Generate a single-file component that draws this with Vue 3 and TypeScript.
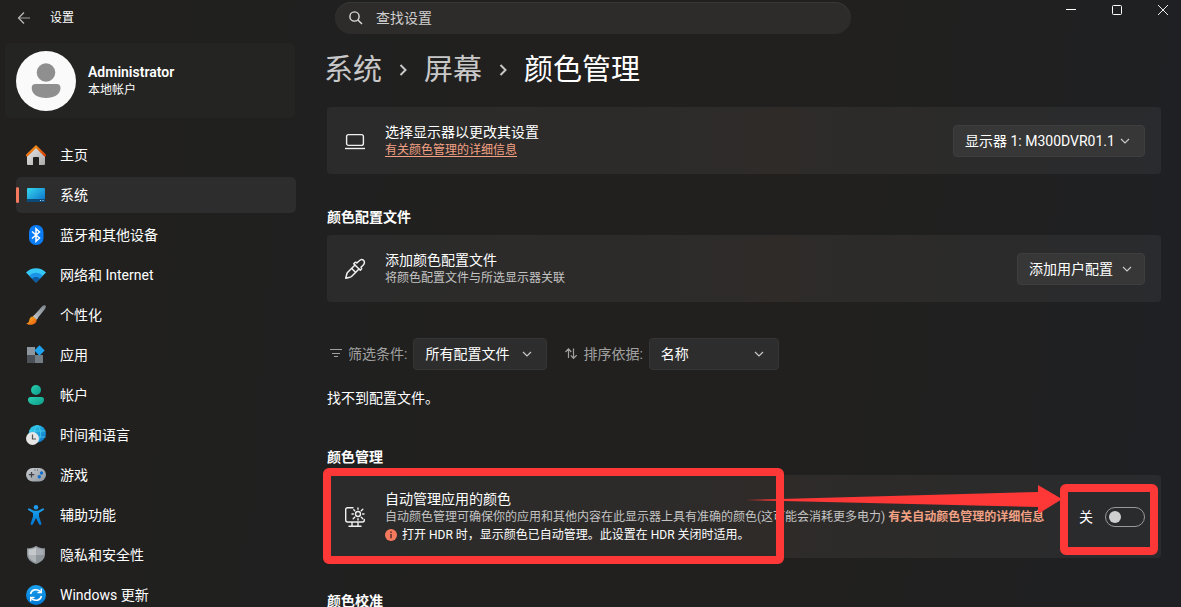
<script setup lang="ts">
import { ref } from 'vue'

interface NavItem {
  id: string
  label: string
}

const navItems: NavItem[] = [
  { id: 'home', label: '主页' },
  { id: 'system', label: '系统' },
  { id: 'bluetooth', label: '蓝牙和其他设备' },
  { id: 'network', label: '网络和 Internet' },
  { id: 'personal', label: '个性化' },
  { id: 'apps', label: '应用' },
  { id: 'accounts', label: '帐户' },
  { id: 'time', label: '时间和语言' },
  { id: 'gaming', label: '游戏' },
  { id: 'access', label: '辅助功能' },
  { id: 'privacy', label: '隐私和安全性' },
  { id: 'update', label: 'Windows 更新' },
]

const current = ref('system')
const query = ref('')
const autoManage = ref(false)
</script>

<template>
  <div class="window">
    <svg class="defs" width="0" height="0" aria-hidden="true">
      <defs>
        <linearGradient id="gRoof" x1="0" y1="0" x2="1" y2="1">
          <stop offset="0" stop-color="#f9a01b" /><stop offset="1" stop-color="#d83b01" />
        </linearGradient>
        <linearGradient id="gWall" x1="0" y1="0" x2="1" y2="1">
          <stop offset="0" stop-color="#e8e8e8" /><stop offset="1" stop-color="#a9a9a9" />
        </linearGradient>
        <linearGradient id="gScreen" x1="0" y1="0" x2="1" y2="1">
          <stop offset="0" stop-color="#35d8ee" /><stop offset="1" stop-color="#0a6cc8" />
        </linearGradient>
        <linearGradient id="gBlue" x1="0" y1="0" x2="0" y2="1">
          <stop offset="0" stop-color="#1ba3f0" /><stop offset="1" stop-color="#0078d4" />
        </linearGradient>
        <linearGradient id="gHandle" x1="1" y1="0" x2="0" y2="1">
          <stop offset="0" stop-color="#7d858c" /><stop offset="1" stop-color="#c3c8cc" />
        </linearGradient>
        <linearGradient id="gBrush" x1="0" y1="0" x2="1" y2="1">
          <stop offset="0" stop-color="#fbb829" /><stop offset="1" stop-color="#e8590c" />
        </linearGradient>
        <linearGradient id="gTeal" x1="0" y1="0" x2="1" y2="1">
          <stop offset="0" stop-color="#2bcfae" /><stop offset="1" stop-color="#0b9c8c" />
        </linearGradient>
        <linearGradient id="gGrey" x1="0" y1="0" x2="1" y2="1">
          <stop offset="0" stop-color="#c9ced3" /><stop offset="1" stop-color="#8e959c" />
        </linearGradient>
      </defs>
    </svg>

    <header class="titlebar">
      <div class="titlebar-left">
        <button class="back" type="button" aria-label="返回">
          <svg width="14" height="14" viewBox="0 0 14 14" fill="none" stroke-width="1.2">
            <path d="M2 7H13" stroke="#8a8a8a" />
            <path d="M7 1.5L1.5 7L7 12.5" stroke="#bdbdbd" />
          </svg>
        </button>
        <span class="app-name">设置</span>
      </div>
      <label class="search">
        <svg width="14" height="14" viewBox="0 0 14 14" fill="none" stroke="#dedede" stroke-width="1.4">
          <circle cx="5.5" cy="5.5" r="4.6" />
          <path d="M8.900 8.900L13 13" />
        </svg>
        <input v-model="query" type="search" placeholder="查找设置" aria-label="查找设置" />
      </label>
      <div class="window-buttons">
        <button type="button" aria-label="最小化">
          <svg width="10" height="10" viewBox="0 0 10 10"><path d="M0 4.5H10" stroke="#fff" /></svg>
        </button>
        <button type="button" aria-label="最大化">
          <svg width="10" height="10" viewBox="0 0 10 10"><rect x=".5" y=".5" width="9" height="9" rx="1" fill="none" stroke="#fff" /></svg>
        </button>
        <button type="button" class="close" aria-label="关闭">
          <svg width="10" height="10" viewBox="0 0 10 10"><path d="M0 0L10 10M10 0L0 10" stroke="#eee" /></svg>
        </button>
      </div>
    </header>

    <div class="body">
      <aside class="sidebar">
        <div class="profile">
          <svg class="avatar" viewBox="0 0 60 60" aria-hidden="true">
            <circle cx="30" cy="30" r="30" fill="#fafafa" />
            <circle cx="30" cy="21.500" r="9.300" fill="#8f8f8f" />
            <path d="M19.500 33H40.700Q44.500 33 44.500 37C44.500 43.500 38 47 30 47S15.700 43.500 15.700 37Q15.700 33 19.500 33Z" fill="#8f8f8f" />
          </svg>
          <div>
            <div class="user-name">Administrator</div>
            <div class="user-kind">本地帐户</div>
          </div>
        </div>

        <nav class="nav">
          <button
            v-for="item in navItems"
            :key="item.id"
            type="button"
            class="nav-item"
            :class="{ active: item.id === current }"
            @click="current = item.id"
          >
            <svg class="nav-icon" viewBox="0 0 20 20" aria-hidden="true">
              <template v-if="item.id === 'home'">
                <path d="M1 9L10 2L19 9V19Q19 20 18 20H13V13Q13 12 12 12H8Q7 12 7 13V20H2Q1 20 1 19Z" fill="url(#gWall)" />
                <path d="M1 10.300L10 1.500L19 10.300" fill="none" stroke="url(#gRoof)" stroke-width="2.400" stroke-linecap="round" stroke-linejoin="round" />
              </template>
              <template v-else-if="item.id === 'system'">
                <rect x="1" y="3" width="18" height="14" rx="1" fill="url(#gScreen)" />
                <path d="M1 14H19V16Q19 17 18 17H2Q1 17 1 16Z" fill="#0c4a78" />
                <path d="M14 15.500H15M16.500 15.500H17.500" stroke="#b8e4ff" />
              </template>
              <template v-else-if="item.id === 'bluetooth'">
                <rect x="3" y="0" width="14.500" height="20" rx="7" fill="#0a7cf5" />
                <path d="M6 6.500L13.500 13L10 16.200V3.800L13.500 7L6 13.500" fill="none" stroke="#fff" stroke-width="1.500" />
              </template>
              <template v-else-if="item.id === 'network'">
                <path d="M0 7.500C5 1.800 15 1.800 20 7.500L10 17.500Z" fill="#35c8f5" />
                <path d="M3.200 10.700C7 6.800 13 6.800 16.800 10.700L10 17.500Z" fill="#1a93e6" />
                <path d="M6 13.500C8.300 11.400 11.700 11.400 14 13.500L10 17.500Z" fill="#0c59a4" />
              </template>
              <template v-else-if="item.id === 'personal'">
                <path d="M7 11.500L16.500 1Q18.500-.600 19.700.800Q20.200 2 19 4L10.500 14.500Z" fill="url(#gHandle)" />
                <path d="M7 11.500L8.300 10L12 13L10.500 14.700Z" fill="#b9bec2" />
                <path d="M7 11.500C4.500 11.500 3.500 13.500 3.200 15.500C3 17 2 18 .300 18.500C2 20 5 20.200 7.500 19.200C10 18.200 10.800 16.500 10.500 14.500Z" fill="url(#gBrush)" />
              </template>
              <template v-else-if="item.id === 'apps'">
                <path d="M1 2H9V10H1Z" fill="#8e969d" />
                <path d="M1 10H9V18H1Z" fill="#4b5157" />
                <path d="M9 10H17V18H9Z" fill="#747c84" />
                <path d="M13.500.300L18.700 5.500L13.500 10.700L8.300 5.500Z" fill="#1fa2ee" />
              </template>
              <template v-else-if="item.id === 'accounts'">
                <circle cx="10" cy="5" r="5" fill="url(#gTeal)" />
                <path d="M4.500 12H15.500Q18 12 18 14.500C18 18.500 14.500 20 10 20S2 18.500 2 14.500Q2 12 4.500 12Z" fill="url(#gTeal)" />
              </template>
              <template v-else-if="item.id === 'time'">
                <circle cx="11.300" cy="8.700" r="8.700" fill="url(#gScreen)" />
                <path d="M3 6H19.600M3 12H19.600M11.300 0C7 4 7 13 11.300 17.400M11.300 0C15.600 4 15.600 13 11.300 17.400" fill="none" stroke="#5ee0f2" stroke-width=".800" opacity=".7" />
                <circle cx="6.500" cy="13.500" r="6.500" fill="#e6e6e6" />
                <path d="M6.500 9.500V14H10" fill="none" stroke="#555" stroke-width="1.200" />
              </template>
              <template v-else-if="item.id === 'gaming'">
                <rect x="0" y="3" width="20" height="13.500" rx="6.700" fill="url(#gGrey)" />
                <path d="M5.500 7V12.500M2.800 9.700H8.300" stroke="#3c4145" stroke-width="1.300" />
                <circle cx="15.500" cy="8" r="1.700" fill="#0f6fcf" />
                <circle cx="13.300" cy="11.800" r="1.700" fill="#0f6fcf" />
                <path d="M8.500 5H9.500M11 5H12" stroke="#4a4f54" />
              </template>
              <template v-else-if="item.id === 'access'">
                <circle cx="10" cy="2.300" r="2.300" fill="#1c9bef" />
                <path d="M2.800 3.300L8 5.700H12L17.200 3.300Q18.500 3.800 17.700 5L13 8V11.500L15.500 19Q14.500 20.500 13.200 19.500L10 13L6.800 19.500Q5.500 20.500 4.500 19L7 11.500V8L2.300 5Q1.500 3.800 2.800 3.300Z" fill="url(#gBlue)" />
              </template>
              <template v-else-if="item.id === 'privacy'">
                <path d="M10 .700C12.500 2.500 15.500 3.300 19 3.300V9C19 14 15.500 17 10 19C4.500 17 1 14 1 9V3.300C4.500 3.300 7.500 2.500 10 .700Z" fill="#8e959b" />
                <path d="M10 2.300C12.300 3.800 14.800 4.500 17.500 4.600V10H10Z" fill="#a7adb2" />
                <path d="M10 2.300C7.700 3.800 5.200 4.500 2.500 4.600V10H10Z" fill="#c4c8cb" />
                <path d="M2.500 10H10V17.400C5.500 15.700 2.900 13.500 2.500 10Z" fill="#aeb3b8" />
              </template>
              <template v-else>
                <circle cx="10" cy="10" r="10" fill="url(#gBlue)" />
                <path d="M4.500 9C5.500 4.500 11.500 3 15 7M15.500 11C14.500 15.500 8.500 17 5 13" fill="none" stroke="#fff" stroke-width="1.500" />
                <path d="M15.300 3.800V7.500H11.500M4.700 16.200V12.500H8.500" fill="none" stroke="#fff" stroke-width="1.400" />
              </template>
            </svg>
            <span>{{ item.label }}</span>
          </button>
        </nav>
      </aside>

      <main class="main">
        <h1 class="breadcrumb">
          <a href="#system">系统</a>
          <svg width="8" height="12" viewBox="0 0 8 12" fill="none" stroke="#c8c8c8" stroke-width="2"><path d="M1.500 1L6.500 6L1.500 11" /></svg>
          <a href="#display">屏幕</a>
          <svg width="8" height="12" viewBox="0 0 8 12" fill="none" stroke="#c8c8c8" stroke-width="2"><path d="M1.500 1L6.500 6L1.500 11" /></svg>
          <span>颜色管理</span>
        </h1>

        <section class="card">
          <svg class="card-icon" viewBox="0 0 20 20" fill="none" stroke="#f0f0f0" stroke-width="1.400" aria-hidden="true">
            <rect x="1.600" y="3.600" width="16.800" height="10.800" rx="2" />
            <path d="M0 17.500H20" />
          </svg>
          <div class="card-text">
            <label class="card-title" for="display">选择显示器以更改其设置</label>
            <a class="more" href="#learn-color">有关颜色管理的详细信息</a>
          </div>
          <div class="picker on-card display-picker">
            <select id="display"><option>显示器 1: M300DVR01.1</option></select>
            <svg class="chevron" viewBox="0 0 10 6"><path d="M1 1L5 5L9 1" /></svg>
          </div>
        </section>

        <h2>颜色配置文件</h2>
        <section class="card">
          <svg class="card-icon" viewBox="0 0 20 20" fill="none" stroke="#f0f0f0" stroke-width="1.500" stroke-linejoin="round" stroke-linecap="round" aria-hidden="true">
            <path d="M10 6L2.500 13.500Q1.700 14.500 1.600 16L.700 19.200L4 18.400Q5.500 18.300 6.500 17.500L14 10" />
            <path d="M8.700 4.700L15.300 11.300L16.500 10Q17 9 16 8.300L18.300 6C20 4 19.500 2 18.500 1.300C17.500.300 15.800.200 14.300 1.700L11.800 4Q11 3 10 3.500Z" />
            <path d="M6.700 9.500L10.500 13.300" />
          </svg>
          <div class="card-text">
            <div class="card-title">添加颜色配置文件</div>
            <div class="note">将颜色配置文件与所选显示器关联</div>
          </div>
          <button class="picker on-card add-button" type="button">
            <span>添加用户配置</span>
            <svg class="chevron" viewBox="0 0 10 6"><path d="M1 1L5 5L9 1" /></svg>
          </button>
        </section>

        <div class="filters">
          <div class="filter">
            <svg width="12" height="12" viewBox="0 0 12 12" stroke="#a0a0a0"><path d="M0 1.500H12M2 5.500H10M4 8.500H8" /></svg>
            <label for="filter">筛选条件:</label>
            <div class="picker filter-picker">
              <select id="filter"><option>所有配置文件</option></select>
              <svg class="chevron" viewBox="0 0 10 6"><path d="M1 1L5 5L9 1" /></svg>
            </div>
          </div>
          <div class="filter">
            <svg width="12" height="12" viewBox="0 0 12 12" fill="none" stroke="#a0a0a0" stroke-width="1.200"><path d="M3.500 10V.500M.500 4L3.500 .800L6.300 4M8.500 .500V10.500M5.800 7.300L8.500 10.300L11.700 7.300" /></svg>
            <label for="sort">排序依据:</label>
            <div class="picker sort-picker">
              <select id="sort"><option>名称</option></select>
              <svg class="chevron" viewBox="0 0 10 6"><path d="M1 1L5 5L9 1" /></svg>
            </div>
          </div>
        </div>
        <p class="empty">找不到配置文件。</p>

        <h2>颜色管理</h2>
        <section class="card tall">
          <svg class="card-icon" viewBox="0 0 20 20" fill="none" stroke="#f0f0f0" stroke-width="1.400" stroke-linecap="round" aria-hidden="true">
            <path d="M8 .800H2.500Q.700.800.700 2.500V13Q.700 15 2.500 15H17.500Q19.300 15 19.300 13V12.500M7 15V19M13 15V19M4 19.300H16" />
            <circle cx="13" cy="7" r="2.500" />
            <path d="M13 1V2.300M13 11.700V13M7 7H8.300M17.700 7H19M8.800 2.800L9.700 3.700M16.300 10.300L17.800 11.800M17.800 2.200L16.300 3.700M9.700 10.300L8.200 11.800" />
          </svg>
          <div class="card-text">
            <div class="card-title">自动管理应用的颜色</div>
            <div class="note">自动颜色管理可确保你的应用和其他内容在此显示器上具有准确的颜色(这可能会消耗更多电力) <a href="#learn-auto">有关自动颜色管理的详细信息</a></div>
            <div class="info">
              <svg width="12" height="12" viewBox="0 0 12 12" aria-hidden="true">
                <circle cx="6" cy="6" r="6" fill="#f5795d" />
                <path d="M6 2.500V4M6 5V9.300" stroke="#3a2420" stroke-width="1.300" />
              </svg>
              <span>打开 HDR 时，显示颜色已自动管理。此设置在 HDR 关闭时适用。</span>
            </div>
          </div>
          <label class="switch">
            <span>{{ autoManage ? '开' : '关' }}</span>
            <input v-model="autoManage" type="checkbox" role="switch" aria-label="自动管理应用的颜色" />
          </label>

          <div class="mark mark-setting"></div>
          <svg class="mark-arrow" viewBox="0 0 316 32" aria-hidden="true">
            <path d="M0 16L293 8V1L317 15L293 30V23Z" fill="#fd3837" />
          </svg>
          <div class="mark mark-switch"></div>
        </section>

        <h2>颜色校准</h2>
      </main>
    </div>
  </div>
</template>

<style>
body {
  margin: 0;
  background: #202020;
}
</style>

<style scoped>
.window {
  display: flex;
  flex-direction: column;
  height: 100vh;
  overflow: hidden;
  background: linear-gradient(95deg, #21201e 0%, #202020 28%, #22201e 55%, #202020 82%, #1f2024 100%);
  color: #fff;
  font-family: Roboto, "Noto Sans CJK SC", sans-serif;
  font-size: 14px;
  line-height: 18px;
}
.defs { position: absolute; }
button, input, select { font: inherit; color: inherit; }
button, select { border: 0; background: none; padding: 0; margin: 0; }

.titlebar {
  display: flex;
  align-items: flex-start;
  flex-shrink: 0;
  height: 36px;
}
.titlebar-left {
  display: flex;
  align-items: center;
  flex: 0 0 335px;
  height: 36px;
  box-sizing: border-box;
  padding-left: 17px;
  gap: 19px;
}
.back, .back svg { display: block; }
.app-name { font-size: 12px; }
.search {
  display: flex;
  align-items: center;
  flex: 0 1 516px;
  height: 32px;
  box-sizing: border-box;
  margin-top: 2px;
  padding: 0 14px;
  gap: 13px;
  border-radius: 16px;
  box-shadow: inset 0 1px #393735;
  background: #2e2c2a;
}
.search input {
  flex: 1;
  min-width: 0;
  padding: 0;
  border: 0;
  outline: 0;
  background: none;
  appearance: none;
}
.search input::placeholder { color: #cfcfcf; opacity: 1; }
.window-buttons { display: flex; margin-left: auto; }
.window-buttons button {
  display: flex;
  align-items: center;
  justify-content: center;
  width: 46px;
  height: 20px;
}
.window-buttons .close { box-sizing: border-box; width: 41px; padding-left: 5px; }

.body { display: flex; flex: 1; min-height: 0; }
.sidebar { flex: 0 0 324px; box-sizing: border-box; padding: 7px 28px 0 5px; }
.profile {
  display: flex;
  align-items: center;
  gap: 12px;
  height: 75px;
  margin-right: 1px;
  padding-left: 11px;
  border-radius: 5px;
  background: #242423;
}
.avatar { width: 60px; height: 60px; }
.user-name { font-weight: 600; }
.user-kind { font-size: 12px; }
.nav { display: flex; flex-direction: column; gap: 4px; padding: 19px 0 0 11px; }
.nav-item {
  display: flex;
  align-items: center;
  gap: 14px;
  flex-shrink: 0;
  height: 36px;
  padding-left: 10px;
  border-radius: 5px;
  text-align: left;
  position: relative;
}
.nav-icon { width: 20px; height: 20px; }
.nav-item.active { background: #2d2d2d; }
.nav-item.active::before {
  content: "";
  position: absolute;
  left: 0;
  top: 10px;
  width: 3px;
  height: 16px;
  border-radius: 2px;
  background: #f5795d;
}

.main { flex: 1; min-width: 0; padding: 0 20px 0 3px; }
.breadcrumb {
  display: flex;
  align-items: center;
  gap: 17px;
  margin: 0 0 18px -3px;
  padding-top: 15px;
  font-size: 29px;
  line-height: 38px;
  font-weight: 400;
}
.breadcrumb a { color: #c8c8c8; text-decoration: none; }
h2 { margin: 34px 0 9px; font-size: 14px; line-height: 18px; font-weight: 600; }
.card {
  position: relative;
  display: flex;
  align-items: center;
  gap: 20px;
  min-height: 67px;
  box-sizing: border-box;
  padding: 14px 16px 14px 18px;
  border-radius: 4px;
  background: linear-gradient(90deg, #2b2b2b, #2e2b29 55%, #2b2b2b 80%, #2a2b2e);
}
.card.tall { min-height: 83px; }
.card-icon { flex: 0 0 20px; height: 20px; overflow: visible; }
.card-text { flex: 1; min-width: 0; white-space: nowrap; }
.card-title { display: block; }
.note, .more, .info { display: block; font-size: 12px; line-height: 18px; }
.note { color: #c4c4c4; }
.more { color: #f2a184; text-underline-offset: 2px; }
.note a { color: #f2a184; text-decoration: none; font-weight: 600; }
.info { display: flex; align-items: center; gap: 5px; }

.picker {
  position: relative;
  display: flex;
  align-items: center;
  height: 32px;
  box-sizing: border-box;
  border: 1px solid #353535;
  border-radius: 4px;
  background: #2d2d2d;
}
.picker.on-card { background: #373737; border-color: #3e3e3e; }
.picker select {
  width: 100%;
  height: 100%;
  padding: 0 28px 0 11px;
  appearance: none;
  outline: 0;
}
.chevron {
  position: absolute;
  right: 14px;
  width: 10px;
  height: 6px;
  fill: none;
  stroke: #c8c8c8;
  stroke-width: 1.2;
  pointer-events: none;
}
.display-picker { width: 192px; }
.add-button { width: 128px; padding-left: 11px; }
.add-button .chevron { right: 12px; }
.filter-picker { width: 134px; }
.sort-picker { width: 130px; }

.filters { display: flex; gap: 18px; margin-top: 36px; padding-left: 3px; }
.filter { display: flex; align-items: center; gap: 6px; color: #a0a0a0; }
.filter .picker { color: #fff; }
.empty { margin: 19px 0 0; }
.empty + h2 { margin-top: 41px; }

.switch { display: flex; align-items: center; gap: 12px; }
.switch input {
  appearance: none;
  width: 40px;
  height: 20px;
  margin: 0;
  box-sizing: border-box;
  padding: 3px;
  border: 1px solid #9a9a9a;
  border-radius: 10px;
}
.switch input::before {
  content: "";
  display: block;
  width: 12px;
  height: 12px;
  border-radius: 50%;
  background: #cfcfcf;
}
.switch input:checked::before { margin-left: auto; }

/* Annotation overlay */
.mark { position: absolute; box-sizing: border-box; border: 8px solid #fd3837; border-radius: 6px; pointer-events: none; }
.mark-setting { left: -4px; top: -7px; bottom: -6px; width: 461px; }
.mark-switch { right: 3px; top: 9px; width: 98px; height: 71px; }
.mark-arrow { position: absolute; right: 100px; top: 9px; width: 316px; height: 32px; pointer-events: none; }
</style>
